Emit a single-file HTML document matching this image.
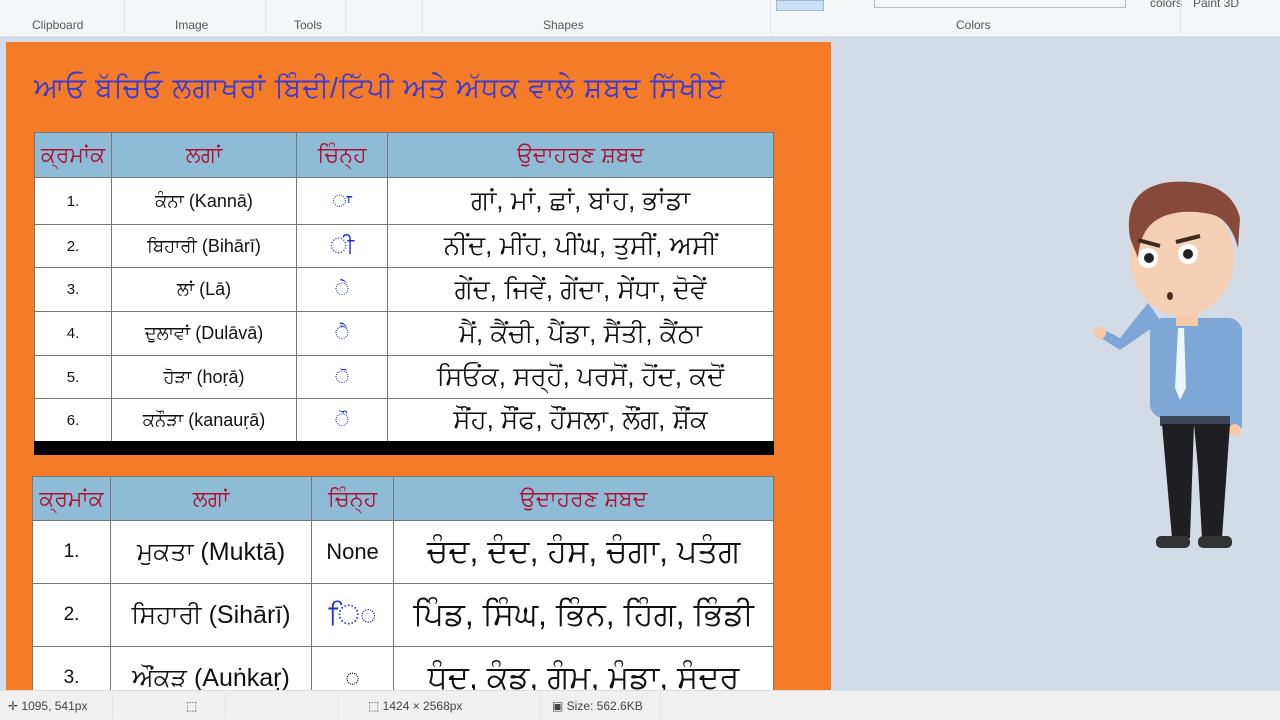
<!DOCTYPE html>
<html><head><meta charset="utf-8"><style>
*{margin:0;padding:0;box-sizing:border-box}
body{width:1280px;height:720px;overflow:hidden;background:#d3dbe6;font-family:"Liberation Sans","DejaVu Sans",sans-serif;position:relative}
.rib{position:absolute;left:0;top:0;width:1280px;height:37px;background:#f5f6f7;border-bottom:1px solid #dde;}
.rib span{position:absolute;top:18px;font-size:12px;color:#555}
.sep{position:absolute;top:0;width:1px;height:34px;background:#e2e4e8}
.panel{position:absolute;left:6px;top:42px;width:825px;height:648px;background:#f47b27}
.title{position:absolute;left:34px;top:72px;font-size:28px;color:#3a3ad6;white-space:nowrap;letter-spacing:1px}
table{position:absolute;border-collapse:collapse;background:#fff}
td,th{border:1px solid #777;text-align:center;color:#111}
th{background:#8ebcd6;color:#b01030;font-weight:normal;font-size:22px}
.t1 td{font-size:18px}
.t2 td{font-size:25px}
.status{position:absolute;left:0;top:690px;width:1280px;height:30px;background:#f0f0f0;border-top:1px solid #ddd;font-size:12px;color:#444}
.status span{position:absolute;top:8px}
.blu{color:#1a2fd0}
</style></head><body>
<div class="rib">
<span style="left:32px">Clipboard</span><span style="left:175px">Image</span><span style="left:294px">Tools</span><span style="left:543px">Shapes</span><span style="left:956px">Colors</span>
<span style="left:1150px;top:-4px">colors</span><span style="left:1193px;top:-4px">Paint 3D</span>
<div class="sep" style="left:124px"></div><div class="sep" style="left:265px"></div><div class="sep" style="left:345px"></div><div class="sep" style="left:422px"></div><div class="sep" style="left:770px"></div><div class="sep" style="left:1180px"></div>
<div style="position:absolute;left:776px;top:0;width:48px;height:11px;background:#cce0f5;border:1px solid #9bc"></div>
<div style="position:absolute;left:874px;top:0;width:252px;height:8px;border:1px solid #bbb;border-top:none"></div>
</div>
<div class="panel"></div>
<div class="title">ਆਓ ਬੱਚਿਓ ਲਗਾਖਰਾਂ ਬਿੰਦੀ/ਟਿੱਪੀ ਅਤੇ ਅੱਧਕ ਵਾਲੇ ਸ਼ਬਦ ਸਿੱਖੀਏ</div>
<table class="t1" style="left:34px;top:132px;width:740px">
<tr style="height:45px"><th style="width:77px">ਕ੍ਰਮਾਂਕ</th><th style="width:185px">ਲਗਾਂ</th><th style="width:91px">ਚਿੰਨ੍ਹ</th><th>ਉਦਾਹਰਣ ਸ਼ਬਦ</th></tr>
<tr style="height:47px"><td style="font-size:15px">1.</td><td>ਕੰਨਾ (Kannā)</td><td class="blu">◌ਾ</td><td style="font-size:26px">ਗਾਂ, ਮਾਂ, ਛਾਂ, ਬਾਂਹ, ਭਾਂਡਾ</td></tr>
<tr style="height:43px"><td style="font-size:15px">2.</td><td>ਬਿਹਾਰੀ (Bihārī)</td><td class="blu" style="font-size:22px">◌ੀ</td><td style="font-size:26px">ਨੀਂਦ, ਮੀਂਹ, ਪੀਂਘ, ਤੁਸੀਂ, ਅਸੀਂ</td></tr>
<tr style="height:44px"><td style="font-size:15px">3.</td><td>ਲਾਂ (Lā)</td><td class="blu">◌ੇ</td><td style="font-size:26px">ਗੇਂਦ, ਜਿਵੇਂ, ਗੇਂਦਾ, ਸੇਂਧਾ, ਦੋਵੇਂ</td></tr>
<tr style="height:44px"><td style="font-size:15px">4.</td><td>ਦੁਲਾਵਾਂ (Dulāvā)</td><td class="blu">◌ੈ</td><td style="font-size:26px">ਮੈਂ, ਕੈਂਚੀ, ਪੈਂਡਾ, ਸੈਂਤੀ, ਕੈਂਠਾ</td></tr>
<tr style="height:43px"><td style="font-size:15px">5.</td><td>ਹੋੜਾ (hoṛā)</td><td class="blu">◌ੋ</td><td style="font-size:26px">ਸਿਓਂਕ, ਸਰ੍ਹੋਂ, ਪਰਸੋਂ, ਹੋਂਦ, ਕਦੋਂ</td></tr>
<tr style="height:43px"><td style="font-size:15px">6.</td><td>ਕਨੌੜਾ (kanauṛā)</td><td class="blu">◌ੌ</td><td style="font-size:26px">ਸੌਂਹ, ਸੌਂਫ, ਹੌਂਸਲਾ, ਲੌਂਗ, ਸ਼ੌਂਕ</td></tr>
</table>
<div style="position:absolute;left:34px;top:441px;width:740px;height:14px;background:#000"></div>
<table class="t2" style="left:32px;top:476px;width:742px">
<tr style="height:44px"><th style="width:78px">ਕ੍ਰਮਾਂਕ</th><th style="width:201px">ਲਗਾਂ</th><th style="width:82px">ਚਿੰਨ੍ਹ</th><th>ਉਦਾਹਰਣ ਸ਼ਬਦ</th></tr>
<tr style="height:63px"><td style="font-size:19px">1.</td><td>ਮੁਕਤਾ (Muktā)</td><td style="font-size:22px">None</td><td style="font-size:32px">ਚੰਦ, ਦੰਦ, ਹੰਸ, ਚੰਗਾ, ਪਤੰਗ</td></tr>
<tr style="height:63px"><td style="font-size:19px">2.</td><td>ਸਿਹਾਰੀ (Sihārī)</td><td class="blu" style="font-size:28px">ਿ◌</td><td style="font-size:32px">ਪਿੰਡ, ਸਿੰਘ, ਭਿੰਨ, ਹਿੰਗ, ਭਿੰਡੀ</td></tr>
<tr style="height:63px"><td style="font-size:19px">3.</td><td>ਔਂਕੜ (Auṅkaṛ)</td><td>◌</td><td style="font-size:32px">ਧੁੰਦ, ਕੁੰਡ, ਗੁੰਮ, ਮੁੰਡਾ, ਸੁੰਦਰ</td></tr>
</table>
<svg style="position:absolute;left:1090px;top:178px" width="160" height="375" viewBox="0 0 160 375">
<path d="M72 145 L58 125 L30 160 L14 152 L8 158 L30 172 L62 150Z" fill="#7ea6d6"/>
<circle cx="10" cy="155" r="6" fill="#f6c9a8"/>
<rect x="60" y="140" width="92" height="100" rx="14" fill="#7ea6d6"/>
<rect x="138" y="150" width="14" height="100" fill="#7ea6d6"/>
<circle cx="145" cy="252" r="6" fill="#f6c9a8"/>
<path d="M88 150 L94 150 L96 210 L90 222 L85 210Z" fill="#eef6ff"/>
<rect x="70" y="238" width="70" height="10" fill="#3a4658"/>
<path d="M72 246 L104 246 L100 360 L82 360Z" fill="#1f1f22"/>
<path d="M104 246 L140 246 L132 360 L112 360 L108 290Z" fill="#1f1f22"/>
<rect x="66" y="358" width="34" height="12" rx="5" fill="#333"/>
<rect x="108" y="358" width="34" height="12" rx="5" fill="#333"/>
<rect x="86" y="128" width="22" height="20" fill="#f6c9a8"/>
<ellipse cx="92" cy="80" rx="52" ry="58" fill="#f6d0b4"/>
<path d="M40 60 Q32 10 80 4 Q140 0 150 40 L148 70 Q140 40 120 36 Q90 30 70 40 Q50 50 48 80Z" fill="#87493a"/>
<circle cx="58" cy="80" r="10" fill="#fff"/><circle cx="98" cy="76" r="10" fill="#fff"/>
<circle cx="59" cy="80" r="5" fill="#222"/><circle cx="98" cy="76" r="5" fill="#222"/>
<path d="M48 62 L70 68 M86 64 L110 58" stroke="#3a2a20" stroke-width="4"/>
<ellipse cx="80" cy="118" rx="3" ry="4" fill="#4a2a20"/>
</svg>
<div class="status">
<span style="left:8px">✛ 1095, 541px</span><span style="left:186px">⬚</span><span style="left:368px">⬚ 1424 × 2568px</span><span style="left:552px">▣ Size: 562.6KB</span>
<div class="sep" style="left:112px;top:2px;height:26px"></div><div class="sep" style="left:225px;top:2px;height:26px"></div><div class="sep" style="left:338px;top:2px;height:26px"></div><div class="sep" style="left:540px;top:2px;height:26px"></div><div class="sep" style="left:660px;top:2px;height:26px"></div>
</div>
</body></html>
